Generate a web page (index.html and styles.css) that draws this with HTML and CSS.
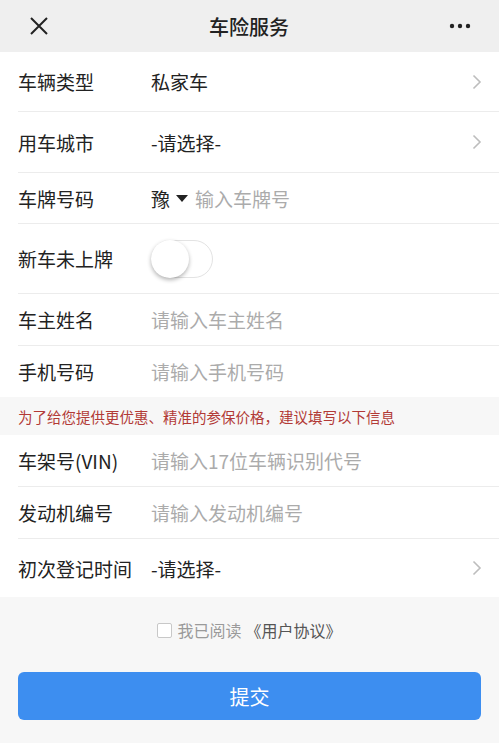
FILE: index.html
```html
<!DOCTYPE html>
<html>
<head>
    <meta charset="utf-8">
    <title>车险服务</title>
    <link rel="stylesheet" href="styles.css">
</head>
<body>
    <div class="topbar">
        <svg class="close" width="20" height="20" viewBox="0 0 20 20"><path d="M2 2 L18 18 M18 2 L2 18" stroke="#222" stroke-width="2" fill="none"/></svg>
        <div class="title">车险服务</div>
        <svg class="more" width="22" height="6" viewBox="0 0 22 6"><circle cx="3" cy="3" r="2.2" fill="#222"/><circle cx="11" cy="3" r="2.2" fill="#222"/><circle cx="19" cy="3" r="2.2" fill="#222"/></svg>
    </div>

    <div class="group">
        <div class="row h60">
            <div class="label">车辆类型</div>
            <div class="value">私家车</div>
            <svg class="arrow" width="10" height="16" viewBox="0 0 10 16"><path d="M1.5 1.5 L8 8 L1.5 14.5" stroke="#bdbdbd" stroke-width="1.6" fill="none"/></svg>
        </div>
        <div class="row h61">
            <div class="label">用车城市</div>
            <div class="value">-请选择-</div>
            <svg class="arrow" width="10" height="16" viewBox="0 0 10 16"><path d="M1.5 1.5 L8 8 L1.5 14.5" stroke="#bdbdbd" stroke-width="1.6" fill="none"/></svg>
        </div>
        <div class="row h51">
            <div class="label">车牌号码</div>
            <div class="value">豫<span class="caret"></span><span class="ph">输入车牌号</span></div>
        </div>
        <div class="row h70">
            <div class="label">新车未上牌</div>
            <div class="value"><div class="switch"><div class="knob"></div></div></div>
        </div>
        <div class="row h52">
            <div class="label">车主姓名</div>
            <div class="value ph">请输入车主姓名</div>
        </div>
        <div class="row h51 last">
            <div class="label">手机号码</div>
            <div class="value ph">请输入手机号码</div>
        </div>
    </div>

    <div class="notice">为了给您提供更优惠、精准的参保价格，建议填写以下信息</div>

    <div class="group">
        <div class="row h52">
            <div class="label">车架号(VIN)</div>
            <div class="value ph">请输入17位车辆识别代号</div>
        </div>
        <div class="row h52">
            <div class="label">发动机编号</div>
            <div class="value ph">请输入发动机编号</div>
        </div>
        <div class="row h59 last">
            <div class="label">初次登记时间</div>
            <div class="value">-请选择-</div>
            <svg class="arrow" width="10" height="16" viewBox="0 0 10 16"><path d="M1.5 1.5 L8 8 L1.5 14.5" stroke="#bdbdbd" stroke-width="1.6" fill="none"/></svg>
        </div>
    </div>

    <div class="agree">
        <span class="box"></span>
        <span class="read">我已阅读</span>
        <span class="link">《用户协议》</span>
    </div>

    <div class="btnwrap">
        <button class="submit">提交</button>
    </div>
</body>
</html>
```

FILE: styles.css
```css
body { margin: 0; background: #f7f7f7; font-family: "Noto Sans CJK SC", "Noto Sans", sans-serif; color: #222; width: 499px; height: 743px; overflow: hidden; }

.topbar { height: 52px; background: #efefef; display: flex; align-items: center; justify-content: space-between; padding: 0 28px 0 29px; }
.topbar .close { display: block; }
.topbar .title { font-size: 20px; font-weight: 500; color: #222; }
.topbar .more { display: block; }

.group { background: #fff; padding-left: 18px; }
.row { display: flex; align-items: center; border-bottom: 1px solid #ececec; padding-right: 17px; box-sizing: border-box; }
.row.last { border-bottom: none; }
.h60 { height: 60px; }
.h61 { height: 61px; }
.h51 { height: 51px; }
.h52 { height: 52px; }
.h59 { height: 58px; }
.h70 { height: 70px; }

.label { width: 133px; font-size: 19px; flex-shrink: 0; }
.value { flex: 1; font-size: 19px; display: flex; align-items: center; }
.ph { color: #ababab; }
.arrow { display: block; }

.caret { display: inline-block; width: 0; height: 0; border-left: 6px solid transparent; border-right: 6px solid transparent; border-top: 7px solid #222; margin: 0 7px 0 6px; }

.switch { width: 62px; height: 38px; border-radius: 19px; border: 1px solid #e3e3e3; box-sizing: border-box; background: #fff; position: relative; }
.knob { position: absolute; left: -1px; top: -1px; width: 38px; height: 38px; border-radius: 50%; background: #fff; box-shadow: 0 2px 4px rgba(0,0,0,0.3); }

.notice { height: 38px; display: flex; align-items: center; padding-left: 18px; font-size: 14.5px; color: #b23a36; background: #f7f7f7; }

.agree { display: flex; align-items: center; justify-content: center; margin-top: 22px; height: 22px; font-size: 16px; }
.agree .box { width: 13px; height: 13px; border: 1px solid #c8c8c8; border-radius: 2px; background: #fff; margin-right: 5px; }
.agree .read { color: #9a9a9a; margin-right: 4px; }
.agree .link { color: #555; }

.btnwrap { padding: 31px 18px 0; }
.submit { display: block; width: 100%; height: 48px; border: none; border-radius: 6px; background: #3d8ef0; color: #fff; font-size: 20px; font-family: "Noto Sans CJK SC", sans-serif; }
```
